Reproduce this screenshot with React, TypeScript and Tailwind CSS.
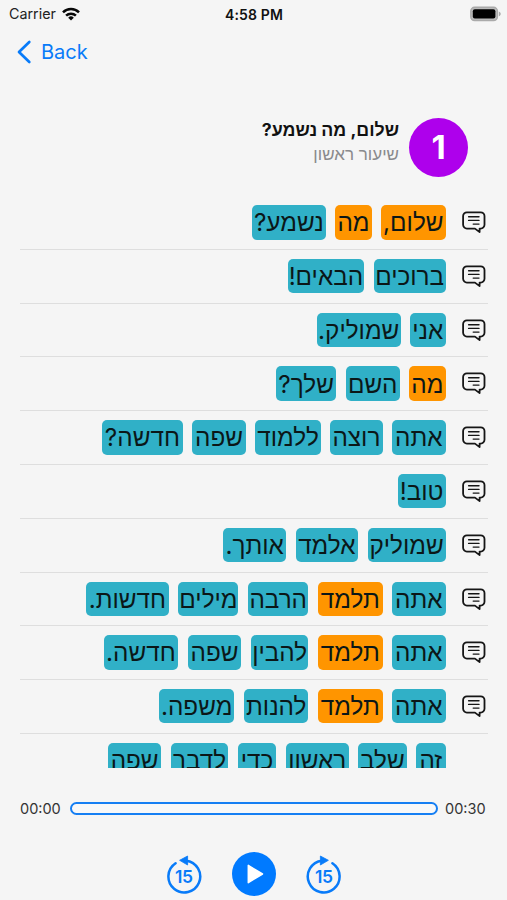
type Word = { text: string; width: number; known?: boolean };

const lines: Word[][] = [
  [
    { text: "שלום,", width: 64.4, known: true },
    { text: "מה", width: 36.2, known: true },
    { text: "נשמע?", width: 74 },
  ],
  [
    { text: "ברוכים", width: 71.8 },
    { text: "הבאים!", width: 76.5 },
  ],
  [
    { text: "אני", width: 35.4 },
    { text: "שמוליק.", width: 83.6 },
  ],
  [
    { text: "מה", width: 36.2, known: true },
    { text: "השם", width: 54 },
    { text: "שלך?", width: 60 },
  ],
  [
    { text: "אתה", width: 53.4 },
    { text: "רוצה", width: 52.2 },
    { text: "ללמוד", width: 65.4 },
    { text: "שפה", width: 53.5 },
    { text: "חדשה?", width: 80.6 },
  ],
  [{ text: "טוב!", width: 48 }],
  [
    { text: "שמוליק", width: 77.8 },
    { text: "אלמד", width: 62.6 },
    { text: "אותך.", width: 62.6 },
  ],
  [
    { text: "אתה", width: 53.4 },
    { text: "תלמד", width: 64.5, known: true },
    { text: "הרבה", width: 60.4 },
    { text: "מילים", width: 60 },
    { text: "חדשות.", width: 83 },
  ],
  [
    { text: "אתה", width: 53.4 },
    { text: "תלמד", width: 64.5, known: true },
    { text: "להבין", width: 57.5 },
    { text: "שפה", width: 53.5 },
    { text: "חדשה.", width: 74.7 },
  ],
  [
    { text: "אתה", width: 53.4 },
    { text: "תלמד", width: 64.5, known: true },
    { text: "להנות", width: 64.4 },
    { text: "משפה.", width: 75.6 },
  ],
  [
    { text: "זה", width: 29.4 },
    { text: "שלב", width: 48.4 },
    { text: "ראשון", width: 62.6 },
    { text: "כדי", width: 38.6 },
    { text: "לדבר", width: 57.2 },
    { text: "שפה", width: 53.5 },
  ],
];

const CommentIcon = () => (
  <svg className="h-6 w-6" viewBox="0 0 24 24" fill="none" stroke="#161616" strokeLinecap="round" strokeLinejoin="round">
    <path strokeWidth="1.8" d="M4.9 2.3h13.8a3.8 3.8 0 0 1 3.8 3.8v8.7a3.8 3.8 0 0 1-3.8 3.8h-1.1v3.5l-4.6-3.5H4.9a3.8 3.8 0 0 1-3.8-3.8V6.1a3.8 3.8 0 0 1 3.8-3.8Z" />
    <path strokeWidth="1.4" d="M6.6 6.7h10.4M6.6 10.4h10.4M11.2 14.1h5.8" />
  </svg>
);

const SkipIcon = ({ forward = false }: { forward?: boolean }) => (
  <svg className="h-[40px] w-[36px]" viewBox="0 0 36 40" fill="none">
    <g transform={forward ? "translate(36 0) scale(-1 1)" : undefined}>
      <path d="M9.6 8.2A15.9 15.9 0 1 0 20 5.7" stroke="#087bf9" strokeWidth="2.5" strokeLinecap="round" />
      <path d="M13.6 5.3 21.6 1v9Z" fill="#087bf9" stroke="#087bf9" strokeWidth=".8" strokeLinejoin="round" />
    </g>
    <text x="17.8" y="27.6" textAnchor="middle" className="fill-[#087bf9] font-['Inter'] text-[17.5px] font-semibold tracking-[-0.4px]">
      15
    </text>
  </svg>
);

const StatusBar = () => (
  <div className="grid h-7 grid-cols-3 items-center pl-[9px] pr-[6px] text-[14px] text-[#222]">
    <div className="flex items-center gap-[6px]">
      <span className="text-[14.3px]">Carrier</span>
      <svg className="h-[14px] w-[18px]" viewBox="0 0 18 14" fill="none" stroke="#080808" strokeWidth="2.5">
        <path d="M1 5.4a11.4 11.4 0 0 1 16 0M4.1 8.7a7 7 0 0 1 9.8 0" />
        <path d="M9 13.4 6.2 10.7a4 4 0 0 1 5.6 0Z" fill="#080808" stroke="none" />
      </svg>
    </div>
    <span className="pr-[2px] text-center text-[14px] font-semibold tracking-[0.15px] text-[#111]">4:58 PM</span>
    <svg className="h-4 w-[31px] justify-self-end" viewBox="0 0 31 16">
      <rect x=".8" y="1.3" width="26.6" height="13.2" rx="3.8" fill="#bbb" stroke="#aaa" strokeWidth="1.4" />
      <rect x="2.8" y="3.3" width="22.6" height="9.3" rx="2" fill="#000" />
      <path d="M28.8 5.6c2.5.8 2.5 3.8 0 4.6Z" fill="#aaa" />
    </svg>
  </div>
);

const Line = ({ words, icon }: { words: Word[]; icon: boolean }) => (
  <div className="flex h-[53.78px] shrink-0 items-start border-b border-[#dedede] pr-[2px] pt-[9px]">
    <div className="mt-[5px] w-6 shrink-0">{icon && <CommentIcon />}</div>
    <div className="mr-[16.5px] flex gap-[9.6px]">
      {words.map((word, i) => (
        <span
          key={i}
          className={`flex h-[34.4px] shrink-0 items-center justify-center whitespace-nowrap rounded-[5px] text-[24.3px] leading-none text-[#0b1718] ${
            word.known ? "bg-[#ff9500]" : "bg-[#30b0c7]"
          }`}
          style={{ width: word.width }}
        >
          {word.text}
        </span>
      ))}
    </div>
  </div>
);

export default function App() {
  return (
    <div className="flex h-[900px] w-[507px] flex-col overflow-hidden bg-[#f5f5f5] font-['Inter','Liberation_Sans',sans-serif]">
      <StatusBar />
      <div className="flex h-12 items-center gap-[9px] pl-[17px] text-[#087bf9]">
        <svg className="h-6 w-[15px]" viewBox="0 0 15 24" fill="none" stroke="#087bf9" strokeWidth="2.7" strokeLinecap="round" strokeLinejoin="round">
          <path d="M12.3 2 2 12l10.3 10" />
        </svg>
        <span className="text-[20px] leading-none">Back</span>
      </div>

      <header dir="rtl" className="mt-[42px] flex h-[59px] shrink-0 items-start gap-[10px] pr-[39px]">
        <div className="flex h-[59px] w-[59px] items-center justify-center rounded-full bg-[#ae00ec] text-[33px] font-bold text-white">
          1
        </div>
        <div className="flex flex-col">
          <h1 className="text-[17.8px] font-bold leading-[23px] text-[#111]">שלום, מה נשמע?</h1>
          <p className="mt-[2px] text-[17px] leading-[22px] text-[#8a8a8d]">שיעור ראשון</p>
        </div>
      </header>

      <main dir="rtl" className="ml-[20px] mr-[19px] mt-[19.2px] flex h-[572.1px] shrink-0 flex-col overflow-hidden">
        {lines.map((words, i) => (
          <Line key={i} words={words} icon={i < lines.length - 1} />
        ))}
      </main>

      <div className="mt-[30.7px] flex h-5 shrink-0 items-center justify-between px-[20px] text-[14.5px] text-[#333]">
        <span className="w-[42px]">00:00</span>
        <div className="h-[13px] w-[368px] rounded-full border-[2.5px] border-[#167ff3] bg-[#f8f8f8]" />
        <span className="w-[42px]">00:30</span>
      </div>

      <div className="mt-[33px] flex shrink-0 items-start justify-center gap-[30px]">
        <div className="mt-[3px]">
          <SkipIcon />
        </div>
        <div className="flex h-11 w-11 items-center justify-center rounded-full bg-[#007aff]">
          <svg className="ml-[3px] h-5 w-[17px]" viewBox="0 0 17 20">
            <path d="M1.3 1.3v17.4L15.5 10Z" fill="#fff" stroke="#fff" strokeWidth="1.5" strokeLinejoin="round" />
          </svg>
        </div>
        <div className="mt-[3px]">
          <SkipIcon forward />
        </div>
      </div>
    </div>
  );
}
